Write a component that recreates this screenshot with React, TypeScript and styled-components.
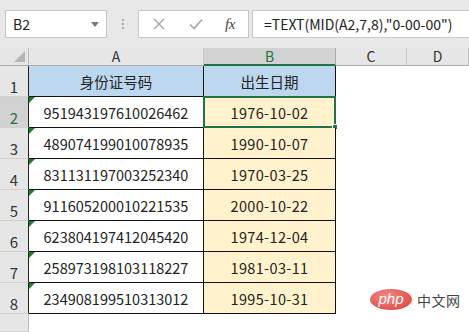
import React from "react";
import styled, { createGlobalStyle } from "styled-components";

const GlobalStyle = createGlobalStyle`
  html, body { margin: 0; padding: 0; background: #ffffff; }
  body { font-family: "Noto Sans CJK SC", "Noto Sans", sans-serif; }
  * { box-sizing: border-box; }
`;

const GREEN = "#217346";

const Page = styled.div`
  position: relative;
  width: 469px;
  height: 332px;
  overflow: hidden;
  display: flex;
  flex-direction: column;
  background: #fff;
`;

const TopBar = styled.div`
  height: 48px;
  flex: none;
  background: #e8e8e8;
  display: flex;
  align-items: flex-start;
  padding: 10px 0 0 5px;
`;

const NameBox = styled.div`
  width: 102px;
  height: 28px;
  background: #fff;
  border: 1px solid #c9c9c9;
  display: flex;
  align-items: center;
  justify-content: space-between;
  padding: 0 7px 0 7px;
  font-size: 14px;
  color: #222;
`;

const DropArrow = styled.span`
  width: 0;
  height: 0;
  border-left: 4.5px solid transparent;
  border-right: 4.5px solid transparent;
  border-top: 5px solid #777;
`;

const Divider = styled.div`
  width: 31px;
  height: 28px;
  display: flex;
  flex-direction: column;
  align-items: center;
  justify-content: center;
  gap: 2px;
`;

const Dot = styled.span`
  width: 2px;
  height: 2px;
  background: #a8a8a8;
`;

const FxControls = styled.div`
  width: 111px;
  height: 28px;
  background: #fff;
  border: 1px solid #c9c9c9;
  display: flex;
  align-items: center;
  padding-left: 14px;
  gap: 0;
`;

const IconSlot = styled.div<{ $w: number }>`
  width: ${(p) => p.$w}px;
  display: flex;
  align-items: center;
  justify-content: flex-start;
`;

const Fx = styled.span`
  font-family: "Liberation Serif", "DejaVu Serif", serif;
  font-style: italic;
  font-size: 15px;
  color: #444;
  letter-spacing: -0.5px;
`;

const FormulaInput = styled.div`
  flex: 1;
  margin-left: 3px;
  height: 28px;
  background: #fff;
  border: 1px solid #c9c9c9;
  border-right: none;
  display: flex;
  align-items: center;
  padding-left: 11px;
  font-size: 14px;
  color: #222;
  white-space: nowrap;
`;

const Sheet = styled.div`
  flex: 1;
  display: grid;
  grid-template-columns: 29px 175px 132px 71px 1fr;
  grid-template-rows: 18px repeat(8, 31px) 1fr;
`;

const Corner = styled.div`
  position: relative;
  background: #e6e6e6;
  border-right: 1px solid #bdbdbd;
  border-bottom: 1px solid #ababab;
`;

const CornerTri = styled.span`
  position: absolute;
  right: 3px;
  bottom: 3px;
  width: 0;
  height: 0;
  border-left: 11px solid transparent;
  border-bottom: 11px solid #b5b5b5;
`;

const ColHeader = styled.div<{ $sel?: boolean }>`
  background: ${(p) => (p.$sel ? "#d2d2d2" : "#e6e6e6")};
  border-right: 1px solid ${(p) => (p.$sel ? "#ababab" : "#c6c6c6")};
  border-bottom: ${(p) => (p.$sel ? `2px solid ${GREEN}` : "1px solid #ababab")};
  display: flex;
  align-items: flex-end;
  justify-content: center;
  padding-bottom: ${(p) => (p.$sel ? "0px" : "1px")};
  font-size: 14px;
  line-height: 16px;
  color: ${(p) => (p.$sel ? GREEN : "#333")};
`;

const RowHeader = styled.div<{ $sel?: boolean; $edge?: string }>`
  background: ${(p) => (p.$sel ? "#d2d2d2" : "#e6e6e6")};
  border-right: 1px solid ${(p) => p.$edge || "#bdbdbd"};
  border-bottom: 1px solid #d0d0d0;
  display: flex;
  align-items: flex-end;
  justify-content: center;
  padding-bottom: 0px;
  font-size: 15px;
  line-height: 18px;
  color: ${(p) => (p.$sel ? GREEN : "#333")};
`;

const Cell = styled.div<{ $bg?: string }>`
  position: relative;
  background: ${(p) => p.$bg || "#fff"};
  border-right: 1px solid #111;
  border-bottom: 1px solid #111;
  display: flex;
  align-items: center;
  justify-content: center;
  font-size: 14.5px;
  color: #222;
  padding-top: 1px;
`;

const DateText = styled.span`
  letter-spacing: 0.35px;
`;

const EmptyCell = styled.div`
  background: #fff;
`;

const ErrorMark = styled.span`
  position: absolute;
  left: 0;
  top: 0;
  width: 0;
  height: 0;
  border-top: 6px solid #1d7f2d;
  border-right: 6px solid transparent;
`;

const ActiveBox = styled.div`
  position: absolute;
  left: -1px;
  top: -1px;
  right: -1px;
  bottom: -1px;
  border: 2px solid ${GREEN};
  pointer-events: none;
`;

const FillHandle = styled.span`
  position: absolute;
  right: -4px;
  bottom: -4px;
  width: 6px;
  height: 6px;
  background: ${GREEN};
  border: 1px solid #fff;
`;

const Watermark = styled.div`
  position: absolute;
  left: 370px;
  top: 289px;
  display: flex;
  align-items: center;
  gap: 5px;
`;

const PhpPill = styled.div`
  width: 42px;
  height: 21px;
  border-radius: 50%;
  background: radial-gradient(ellipse at 40% 35%, #f08a86 0%, #e3524e 70%, #d94541 100%);
  display: flex;
  align-items: center;
  justify-content: center;
  font-family: "Liberation Sans", Arial, sans-serif;
  font-style: italic;
  font-size: 15px;
  color: #fff;
  line-height: 1;
  padding-bottom: 2px;
`;

const SiteName = styled.span`
  font-size: 14px;
  color: #444;
  letter-spacing: 0.5px;
`;

const rows: [string, string][] = [
  ["951943197610026462", "1976-10-02"],
  ["489074199010078935", "1990-10-07"],
  ["831131197003252340", "1970-03-25"],
  ["911605200010221535", "2000-10-22"],
  ["623804197412045420", "1974-12-04"],
  ["258973198103118227", "1981-03-11"],
  ["234908199510313012", "1995-10-31"],
];

const CrossIcon = () => (
  <svg width="12" height="12" viewBox="0 0 12 12">
    <path d="M1 1 L11 11 M11 1 L1 11" stroke="#a6a6a6" strokeWidth="1.4" fill="none" />
  </svg>
);

const CheckIcon = () => (
  <svg width="14" height="12" viewBox="0 0 14 12">
    <path d="M1 6.5 L5 10.5 L13 1.5" stroke="#a6a6a6" strokeWidth="1.6" fill="none" />
  </svg>
);

export default function App() {
  return (
    <Page>
      <GlobalStyle />
      <TopBar>
        <NameBox>
          <span>B2</span>
          <DropArrow />
        </NameBox>
        <Divider>
          <Dot />
          <Dot />
          <Dot />
        </Divider>
        <FxControls>
          <IconSlot $w={36}>
            <CrossIcon />
          </IconSlot>
          <IconSlot $w={36}>
            <CheckIcon />
          </IconSlot>
          <IconSlot $w={20}>
            <Fx>fx</Fx>
          </IconSlot>
        </FxControls>
        <FormulaInput>=TEXT(MID(A2,7,8),"0-00-00")</FormulaInput>
      </TopBar>
      <Sheet>
        <Corner>
          <CornerTri />
        </Corner>
        <ColHeader>A</ColHeader>
        <ColHeader $sel>B</ColHeader>
        <ColHeader>C</ColHeader>
        <ColHeader>D</ColHeader>

        <RowHeader $edge="#222">1</RowHeader>
        <Cell $bg="#bdd7ee">身份证号码</Cell>
        <Cell $bg="#bdd7ee">出生日期</Cell>
        <EmptyCell />
        <EmptyCell />

        {rows.map(([id, date], i) => (
          <React.Fragment key={id}>
            <RowHeader $sel={i === 0} $edge="#222">
              {i + 2}
            </RowHeader>
            <Cell>
              <ErrorMark />
              {id}
            </Cell>
            <Cell $bg="#fff2cc">
              <DateText>{date}</DateText>
              {i === 0 && (
                <ActiveBox>
                  <FillHandle />
                </ActiveBox>
              )}
            </Cell>
            <EmptyCell />
            <EmptyCell />
          </React.Fragment>
        ))}

        <RowHeader />
        <EmptyCell />
        <EmptyCell />
        <EmptyCell />
        <EmptyCell />
      </Sheet>
      <Watermark>
        <PhpPill>php</PhpPill>
        <SiteName>中文网</SiteName>
      </Watermark>
    </Page>
  );
}
